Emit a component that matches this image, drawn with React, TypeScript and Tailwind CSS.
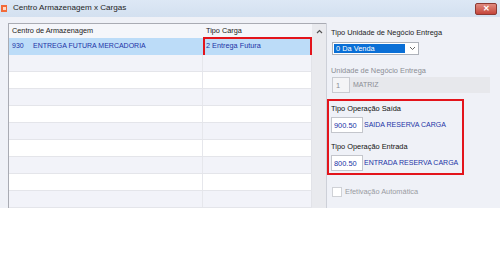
import React from "react";

const font = { fontFamily: '"Liberation Sans", Arial, sans-serif' };

function TitleBar() {
  return (
    <div className="flex h-[17px] items-center bg-gradient-to-b from-[#dde8f5] to-[#d3e0f0] pl-[1px] pr-[3px]">
      <div className="flex h-[7px] w-[6px] items-center justify-center bg-[#f26b3a]">
        <div className="h-[3px] w-[3px] bg-[#ffd9c6]" />
      </div>
      <span className="ml-[6px] text-[8.1px] text-[#1e1e1e]">Centro Armazenagem x Cargas</span>
      <div className="ml-auto flex h-[12px] w-[22px] items-center justify-center rounded-[2px] border border-[#8c3a33] bg-gradient-to-b from-[#e08a80] to-[#c4443a]">
        <span className="text-[8px] font-bold leading-none text-white">✕</span>
      </div>
    </div>
  );
}

function Grid() {
  const rows = Array.from({ length: 9 });
  return (
    <div className="flex h-full w-[318px] border-l border-t border-[#a9abb3]">
      <div className="flex w-[304px] flex-col">
        <div className="flex h-[16px] items-center bg-[#f5f6fa] text-[7.3px] text-[#222]">
          <div className="w-[194px] pl-[3px]">Centro de Armazenagem</div>
          <div className="pl-[3px]">Tipo Carga</div>
        </div>
        <div className="flex h-[17px] items-center bg-[#bcdcf8] text-[7px] text-[#2233a6]">
          <div className="flex w-[194px] pl-[3px]">
            <span className="w-[21px]">930</span>
            <span>ENTREGA FUTURA MERCADORIA</span>
          </div>
          <div className="flex h-[20px] w-[109px] items-center border-2 border-[#e3141b] pl-[1px] text-[7.3px]">
            2 Entrega Futura
          </div>
        </div>
        {rows.map((_, i) => (
          <div
            key={i}
            className={`flex h-[17px] shrink-0 border-b border-[#e4e5ea] ${i % 2 === 0 ? "bg-[#f2f3f9]" : "bg-white"}`}
          >
            <div className="w-[194px] border-r border-[#e6e7ec]" />
            <div className="w-[109px] border-r border-[#e2e3e8]" />
          </div>
        ))}
      </div>
      <div className="flex w-[14px] flex-col items-center bg-[#e9eaee] pt-[5px]">
        <svg width="7" height="5" viewBox="0 0 7 5">
          <path d="M1 4 L3.5 1.5 L6 4" fill="none" stroke="#555" strokeWidth="1.2" />
        </svg>
      </div>
    </div>
  );
}

function Panel() {
  return (
    <div className="flex h-full flex-1 flex-col border-l border-[#cdd0d8] pl-[3px] text-[7.4px]">
      <div className="ml-[1px] mt-[4px] text-[#222]">Tipo Unidade de Negócio Entrega</div>
      <div className="ml-[2px] mt-[4px] flex h-[13px] w-[87px] items-center border border-[#aeb2ba] bg-white pl-[1px]">
        <div className="flex h-[9px] w-[71px] items-center bg-[#0a6fd6] pl-[2px] text-white">0 Da Venda</div>
        <svg className="ml-[4px]" width="7" height="5" viewBox="0 0 7 5">
          <path d="M1 1 L3.5 3.5 L6 1" fill="none" stroke="#666" strokeWidth="1" />
        </svg>
      </div>
      <div className="ml-[1px] mt-[10px] text-[#8b8d94]">Unidade de Negócio Entrega</div>
      <div className="ml-[2px] mt-[1px] flex h-[16px] w-[158px] items-center bg-[#e7e8ec]">
        <div className="flex h-[16px] w-[18px] items-center border border-[#c9cbd1] bg-[#f4f4f6] pl-[3px] text-[#8b8d94]">1</div>
        <span className="ml-[3px] text-[7px] text-[#8b8d94]">MATRIZ</span>
      </div>
      <div className="-ml-[3px] mt-[6px] flex h-[76px] w-[137px] flex-col border-2 border-[#e3141b] pl-[2px]">
        <div className="mt-[2px] text-[#111]">Tipo Operação Saída</div>
        <div className="mt-[3px] flex items-center">
          <div className="flex h-[16px] w-[32px] items-center border border-[#c4c6cc] bg-white pl-[2px] text-[#2233a6]">900.50</div>
          <span className="ml-[1px] text-[7px] text-[#2233a6]">SAIDA RESERVA CARGA</span>
        </div>
        <div className="mt-[8px] text-[#111]">Tipo Operação Entrada</div>
        <div className="mt-[3px] flex items-center">
          <div className="flex h-[16px] w-[32px] items-center border border-[#c4c6cc] bg-white pl-[2px] text-[#2233a6]">800.50</div>
          <span className="ml-[1px] text-[7px] text-[#2233a6]">ENTRADA RESERVA CARGA</span>
        </div>
      </div>
      <div className="ml-[2px] mt-[11px] flex items-center">
        <div className="h-[10px] w-[10px] border border-[#cfd1d6] bg-white" />
        <span className="ml-[3px] text-[#9a9ca3]">Efetivação Automática</span>
      </div>
    </div>
  );
}

export default function App() {
  return (
    <div className="h-[259px] w-[500px] bg-white" style={font}>
      <div className="flex h-[208px] flex-col">
        <TitleBar />
        <div className="flex flex-1 overflow-hidden bg-[#eff1f7] pl-[8px] pt-[6px]">
          <Grid />
          <Panel />
        </div>
      </div>
    </div>
  );
}
